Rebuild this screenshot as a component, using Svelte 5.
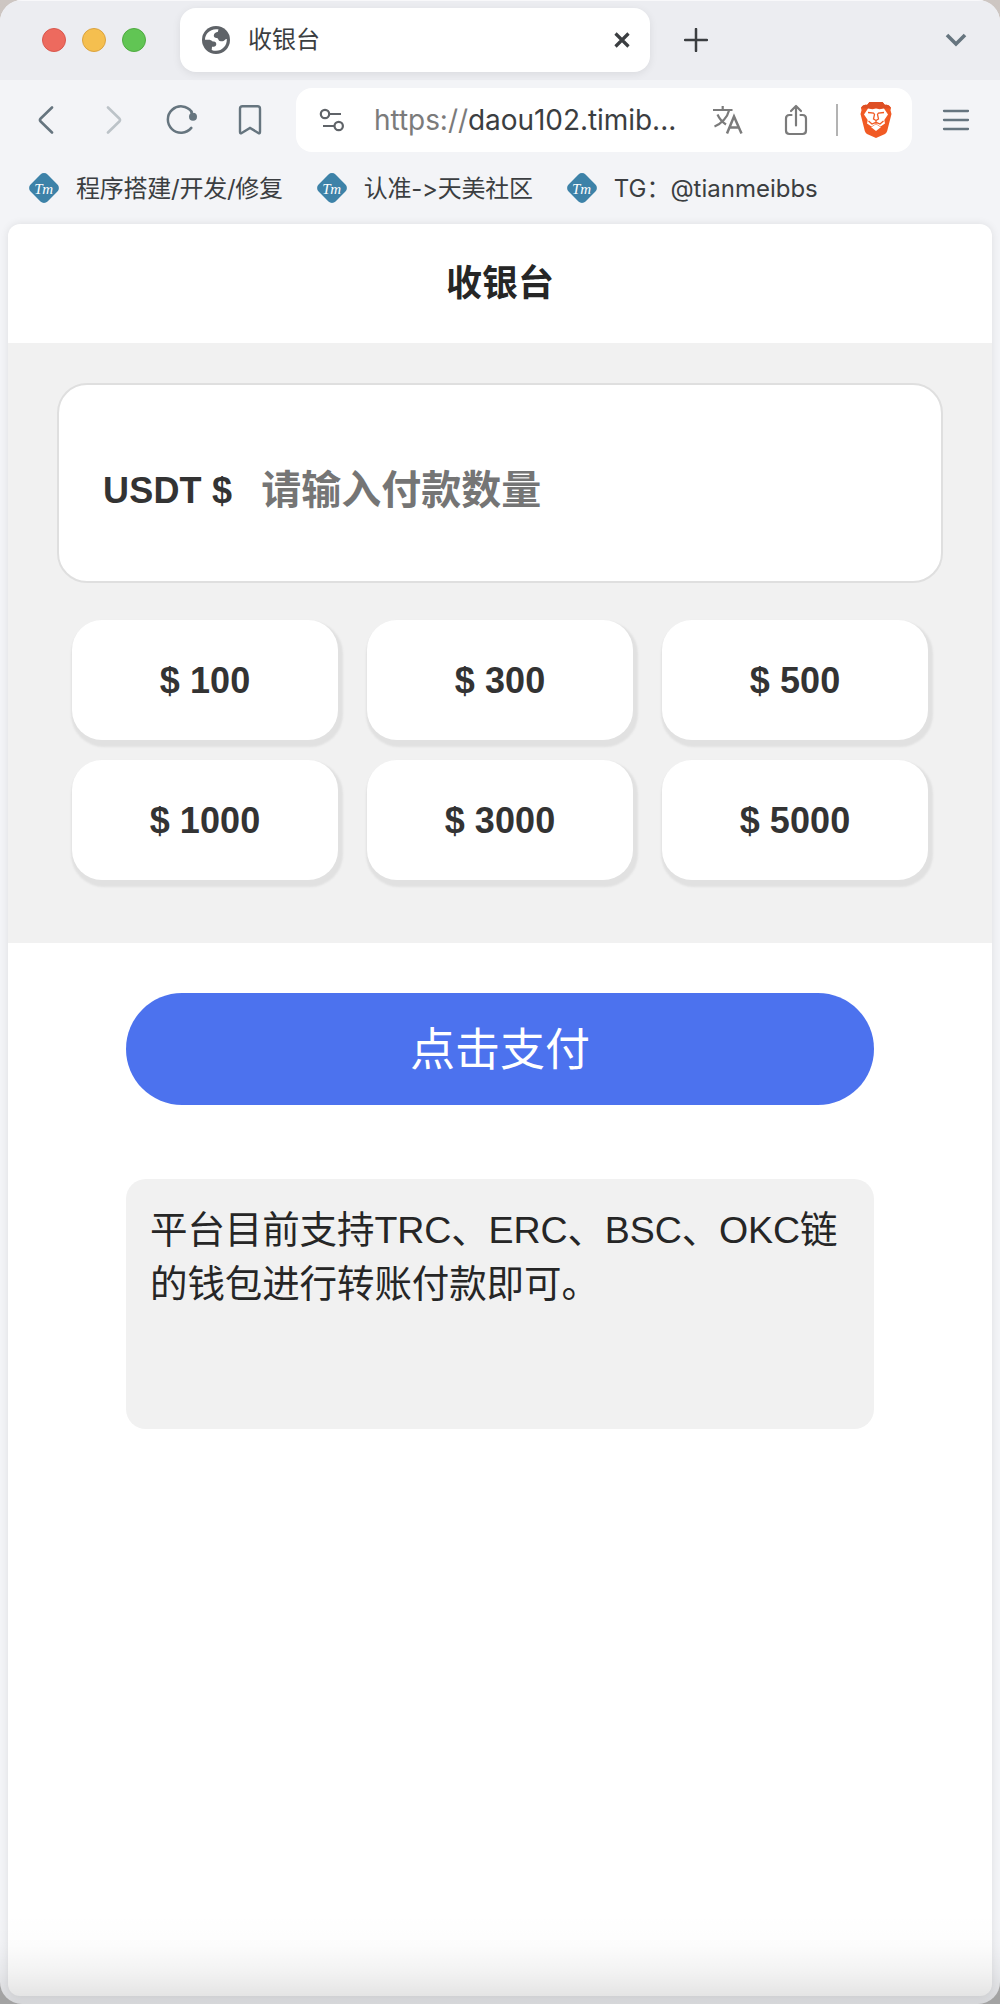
<script lang="ts">
  const bookmarks = ['程序搭建/开发/修复', '认准->天美社区', 'TG：@tianmeibbs'];
  const amounts = [100, 300, 500, 1000, 3000, 5000];

  let amount = $state('');
</script>

<div class="window">
  <div class="tabs">
    <div class="lights">
      <span class="light red"></span>
      <span class="light yellow"></span>
      <span class="light green"></span>
    </div>
    <div class="tab">
      <svg class="globe" width="28" height="28" viewBox="0 0 28 28" aria-hidden="true">
        <circle cx="14" cy="14" r="14" fill="#5f6368" />
        <path
          d="M3 13.800C2.900 8.400 7.600 3.200 14 3.200c.9 0 1.800.1 2.600.3-.5.8-.7 1.500-.6 2.300-2.300.3-4 1.700-4.200 3.500-.1 1.800 1 2.600 2.800 2.700 1.300.1 1.500.9 2 2 .5 1.100 1.500 1.300 3.200 1.300 1.400 0 2.300-.5 3-1.400.7-.8 1.300-1 2-.9.4 6.600-4.600 11.800-10.800 11.800-1.600 0-3-.3-4.300-.9l.3-3.200c2.300.1 4.200-.4 4.300-2.500.1-2.400-1.700-2.700-3.600-2.700-1.200-1.200-2.500-1.700-4.200-1.700z"
          fill="#fff"
        />
      </svg>
      <span class="tab-title">收银台</span>
      <svg width="16" height="16" viewBox="0 0 16 16" aria-hidden="true">
        <path d="M1.500 1.500l13 13M14.500 1.500l-13 13" stroke="#3b3e41" stroke-width="3.200" />
      </svg>
    </div>
    <svg class="new-tab" width="24" height="24" viewBox="0 0 24 24" aria-hidden="true">
      <path d="M12 1v22M1 12h22" stroke="#3b3e41" stroke-width="2.500" stroke-linecap="round" />
    </svg>
    <svg class="tab-search" width="22" height="14" viewBox="0 0 22 14" aria-hidden="true">
      <path d="M2 2l9 9 9-9" fill="none" stroke="#66757f" stroke-width="3.600" />
    </svg>
  </div>

  <div class="toolbar">
    <svg class="back" width="16" height="28" viewBox="0 0 16 28" fill="none" aria-hidden="true">
      <path
        d="M14 1.500L2.700 12.500q-1.500 1.500 0 3L14 26.500"
        stroke="#66757f"
        stroke-width="2.600"
        stroke-linecap="round"
      />
    </svg>
    <svg class="forward" width="16" height="28" viewBox="0 0 16 28" fill="none" aria-hidden="true">
      <path
        d="M2 1.500l11.300 11q1.500 1.500 0 3L2 26.500"
        stroke="#bcc3c8"
        stroke-width="2.600"
        stroke-linecap="round"
      />
    </svg>
    <svg class="reload" width="32" height="30" viewBox="0 0 32 30" fill="none" aria-hidden="true">
      <path
        d="M25.500 6.500A13.200 13.200 0 1 0 25.300 22.900"
        stroke="#66757f"
        stroke-width="2.500"
        stroke-linecap="round"
      />
      <path d="M25 6l1.500 4" stroke="#66757f" stroke-width="2.500" />
      <circle cx="27" cy="11.800" r="4" fill="#66757f" />
    </svg>
    <svg class="save" width="24" height="30" viewBox="0 0 24 30" fill="none" aria-hidden="true">
      <path
        d="M4.500 1.200h15q2.500 0 2.500 2.500v23.300q0 2-1.700.9L12 22.900l-8.300 5q-1.700 1.100-1.700-.9V3.700q0-2.500 2.500-2.500z"
        stroke="#66757f"
        stroke-width="2.400"
      />
    </svg>
    <div class="address">
      <svg width="26" height="24" viewBox="0 0 26 24" fill="none" aria-hidden="true">
        <g stroke="#5f6368" stroke-width="2.200">
          <circle cx="6" cy="6" r="4.200" />
          <path d="M11 6h11M4 18h11" />
          <circle cx="19.700" cy="18" r="4.200" />
        </g>
      </svg>
      <span class="url"><span class="scheme">https://</span>daou102.timib...</span>
      <svg class="translate" width="32" height="30" viewBox="0 0 32 30" fill="none" aria-hidden="true">
        <g stroke="#7b7b7b" stroke-width="2.200">
          <path d="M1 5h19.500M10.700 1v4M17 5.500C15.500 12 10 18.500 2.500 21.500M5.500 9.500C7.500 14 11 17.500 14 19.500" />
          <path d="M15 28.500l7-17 7.500 17M17.500 22.500h9.500" stroke-width="2.500" />
        </g>
      </svg>
      <svg class="share" width="24" height="32" viewBox="0 0 24 32" fill="none" aria-hidden="true">
        <g stroke="#7b7b7b" stroke-width="2.200" stroke-linecap="round" stroke-linejoin="round">
          <path d="M7.500 11H5.500Q2 11 2 14.500v12Q2 30 5.500 30h13q3.500 0 3.500-3.500v-12q0-3.500-3.500-3.500h-2" />
          <path d="M12 21.500V2.500M7 7l5-5 5 5" />
        </g>
      </svg>
      <span class="divider"></span>
      <svg class="shield" width="32" height="36" viewBox="0 0 32 36" aria-hidden="true">
        <path
          d="M9.500 0h13l2.500 3c2.500-.7 4.500.6 6 3l-.5 2.200 1 3.800-4.300 17Q26.500 31 25 32L16 36l-9-4Q5.500 31 4.800 29L.5 12l1-3.800L1 6C2.500 3.600 4.500 2.300 7 3z"
          fill="#f15a24"
        />
        <path d="M9.500 0h13l2.500 3c2.500-.7 4.500.6 6 3L22 7l-6-1-6 1-9-1C2.500 3.600 4.500 2.300 7 3z" fill="#de4f24" />
        <path
          d="M8 6.500l4.500.7 3.500-.7 3.500.7 4.500-.7 4 6-3.700 5.500.7 3.500-4.500 3L16 21.700 11.500 24.500 7 21.500l.7-3.500L4 12.500z"
          fill="#fff"
        />
        <path d="M16 22.300l4.800 3L16 29l-4.800-3.700z" fill="#fff" />
        <path
          d="M8 10.500l5.500.5 1 1.500-1 4.500 2.500 1.500 2.500-1.500-1-4.500 1-1.500 5.500-.5M16 18.500v3.300M8.500 19l3.500 3 4-1.700 4 1.700 3.500-3"
          fill="none"
          stroke="#f15a24"
          stroke-width="1.300"
        />
      </svg>
    </div>
    <svg class="menu" width="28" height="22" viewBox="0 0 28 22" aria-hidden="true">
      <path
        d="M2 2h24M2 11h24M2 20h24"
        stroke="#66757f"
        stroke-width="2.300"
        stroke-linecap="round"
      />
    </svg>
  </div>

  <div class="bookmarks">
    {#each bookmarks as label}
      <div class="bookmark">
        <svg width="30" height="30" viewBox="0 0 30 30" aria-hidden="true">
          <rect x="3" y="3" width="24" height="24" rx="5" transform="rotate(45 15 15)" fill="#3d82a8" />
          <text x="14.500" y="20.500" text-anchor="middle" class="mark">Tm</text>
        </svg>
        <span>{label}</span>
      </div>
    {/each}
  </div>

  <main class="page">
    <h1>收银台</h1>
    <section class="pay-form">
      <label class="amount">
        <span>USDT $</span>
        <input bind:value={amount} placeholder="请输入付款数量" />
      </label>
      <div class="presets">
        {#each amounts as value}
          <button class="preset" onclick={() => (amount = String(value))}>$ {value}</button>
        {/each}
      </div>
    </section>
    <button class="submit">点击支付</button>
    <p class="notice">平台目前支持TRC、ERC、BSC、OKC链的钱包进行转账付款即可。</p>
  </main>
  <div class="fade"></div>
</div>

<style>
  :global(body) {
    background: linear-gradient(#cdc6c2, #a3a3a3);
  }

  .window {
    position: relative;
    box-sizing: border-box;
    display: flex;
    flex-direction: column;
    width: 1000px;
    height: 2004px;
    padding-bottom: 8px;
    border-radius: 22px;
    overflow: hidden;
    background: #f3f4f7;
    font-family: Inter, 'Noto Sans CJK SC', sans-serif;
  }

  svg {
    flex: none;
  }

  /* browser chrome */
  .tabs {
    box-sizing: border-box;
    display: flex;
    align-items: center;
    height: 80px;
    padding: 0 33px 0 42px;
    background: #ecedf1;
    box-shadow: inset 0 1px #f8f8fa;
  }

  .lights {
    display: flex;
    gap: 16px;
  }

  .light {
    box-sizing: border-box;
    width: 24px;
    height: 24px;
    border: 1px solid #d9574d;
    border-radius: 50%;
    background: #ed6a5e;
  }

  .yellow {
    border-color: #dba33f;
    background: #f5bf4f;
  }

  .green {
    border-color: #4fab40;
    background: #61c554;
  }

  .tab {
    box-sizing: border-box;
    display: flex;
    align-items: center;
    width: 470px;
    height: 64px;
    margin-left: 34px;
    padding: 0 20px 0 22px;
    border-radius: 16px;
    background: #fff;
    box-shadow: 0 2px 8px rgba(0, 0, 0, 0.08);
  }

  .tab-title {
    flex: 1;
    margin-left: 18px;
    font-size: 24px;
    line-height: 36px;
    color: #3b3e41;
  }

  .new-tab {
    margin-left: 34px;
  }

  .tab-search {
    margin-left: auto;
  }

  .toolbar {
    display: flex;
    align-items: center;
    height: 80px;
  }

  .back {
    margin-left: 38px;
  }

  .forward {
    margin-left: 52px;
  }

  .reload {
    margin-left: 44px;
  }

  .save {
    margin-left: 40px;
  }

  .address {
    box-sizing: border-box;
    display: flex;
    align-items: center;
    width: 616px;
    height: 64px;
    margin-left: 34px;
    padding-left: 23px;
    border-radius: 16px;
    background: #fff;
  }

  .url {
    width: 308px;
    margin-left: 29px;
    font-size: 28px;
    letter-spacing: -0.05px;
    white-space: nowrap;
    color: #3b3e41;
  }

  .scheme {
    color: #7b7b7b;
  }

  .translate {
    margin-left: 30px;
  }

  .share {
    margin-left: 40px;
  }

  .divider {
    width: 2px;
    height: 32px;
    margin-left: 28px;
    background: #b3b3b3;
  }

  .shield {
    margin-left: 22px;
  }

  .menu {
    margin-left: 30px;
  }

  .bookmarks {
    display: flex;
    gap: 34px;
    height: 64px;
    padding-left: 29px;
  }

  .bookmark {
    display: flex;
    align-items: center;
    gap: 17px;
    height: 56px;
    font-size: 24px;
    letter-spacing: -0.25px;
    color: #3b3e41;
    white-space: nowrap;
  }

  .bookmark span {
    margin-top: -4px;
  }

  .bookmark:last-child {
    letter-spacing: 0;
  }

  .mark {
    font: italic 15px 'Liberation Serif', serif;
    fill: #fff;
  }

  /* checkout page */
  .page {
    flex: 1;
    display: flex;
    flex-direction: column;
    align-items: center;
    margin: 0 8px;
    border-radius: 12px;
    overflow: hidden;
    background: #fff;
    box-shadow: 0 0 8px rgba(0, 0, 0, 0.09);
    font-family: 'Liberation Sans', 'Noto Sans CJK SC', sans-serif;
  }

  h1 {
    margin: 0;
    font-size: 36px;
    line-height: 119px;
    color: #262626;
  }

  .pay-form {
    box-sizing: border-box;
    width: 100%;
    height: 600px;
    padding: 40px 49px 0;
    background: #f1f1f1;
  }

  .amount {
    box-sizing: border-box;
    display: flex;
    align-items: center;
    height: 200px;
    padding: 14px 45px 0 44px;
    border: 2px solid #dfdfdf;
    border-radius: 30px;
    background: #fff;
    font-size: 36px;
    font-weight: 700;
    letter-spacing: 0.2px;
    color: #333;
  }

  .amount span {
    padding-top: 2px;
  }

  input {
    flex: 1;
    min-width: 0;
    height: 60px;
    margin-left: 29px;
    padding: 0;
    border: 0;
    outline: 0;
    background: none;
    font: 700 40px 'Liberation Sans', 'Noto Sans CJK SC', sans-serif;
    color: #333;
  }

  input::placeholder {
    color: #757575;
  }

  .presets {
    display: grid;
    grid-template-columns: repeat(3, 266px);
    gap: 20px 29px;
    margin: 37px 15px 0;
  }

  .preset {
    height: 120px;
    padding: 2px 0 0;
    border: 0;
    border-radius: 30px;
    background: #fff;
    box-shadow: 2px 4px 2px 3px #e1e1e1;
    font: 700 36px 'Liberation Sans', sans-serif;
    letter-spacing: 0.1px;
    color: #333;
  }

  .submit {
    width: 748px;
    height: 112px;
    margin-top: 50px;
    padding: 0 0 6px;
    border: 0;
    border-radius: 56px;
    background: #4c72ee;
    font: 45px 'Noto Sans CJK SC', sans-serif;
    color: #fff;
  }

  .notice {
    box-sizing: border-box;
    width: 748px;
    height: 250px;
    margin: 74px 0 0;
    padding: 24px;
    border-radius: 20px;
    background: #f1f1f1;
    font-size: 37.5px;
    line-height: 54px;
    letter-spacing: -0.1px;
    color: #262626;
  }

  /* dims the last rows of the window */
  .fade {
    position: absolute;
    right: 0;
    bottom: 0;
    left: 0;
    height: 90px;
    background: linear-gradient(
      transparent,
      rgba(0, 0, 0, 0.01) 35%,
      rgba(0, 0, 0, 0.05) 65%,
      rgba(0, 0, 0, 0.12)
    );
    pointer-events: none;
  }
</style>
